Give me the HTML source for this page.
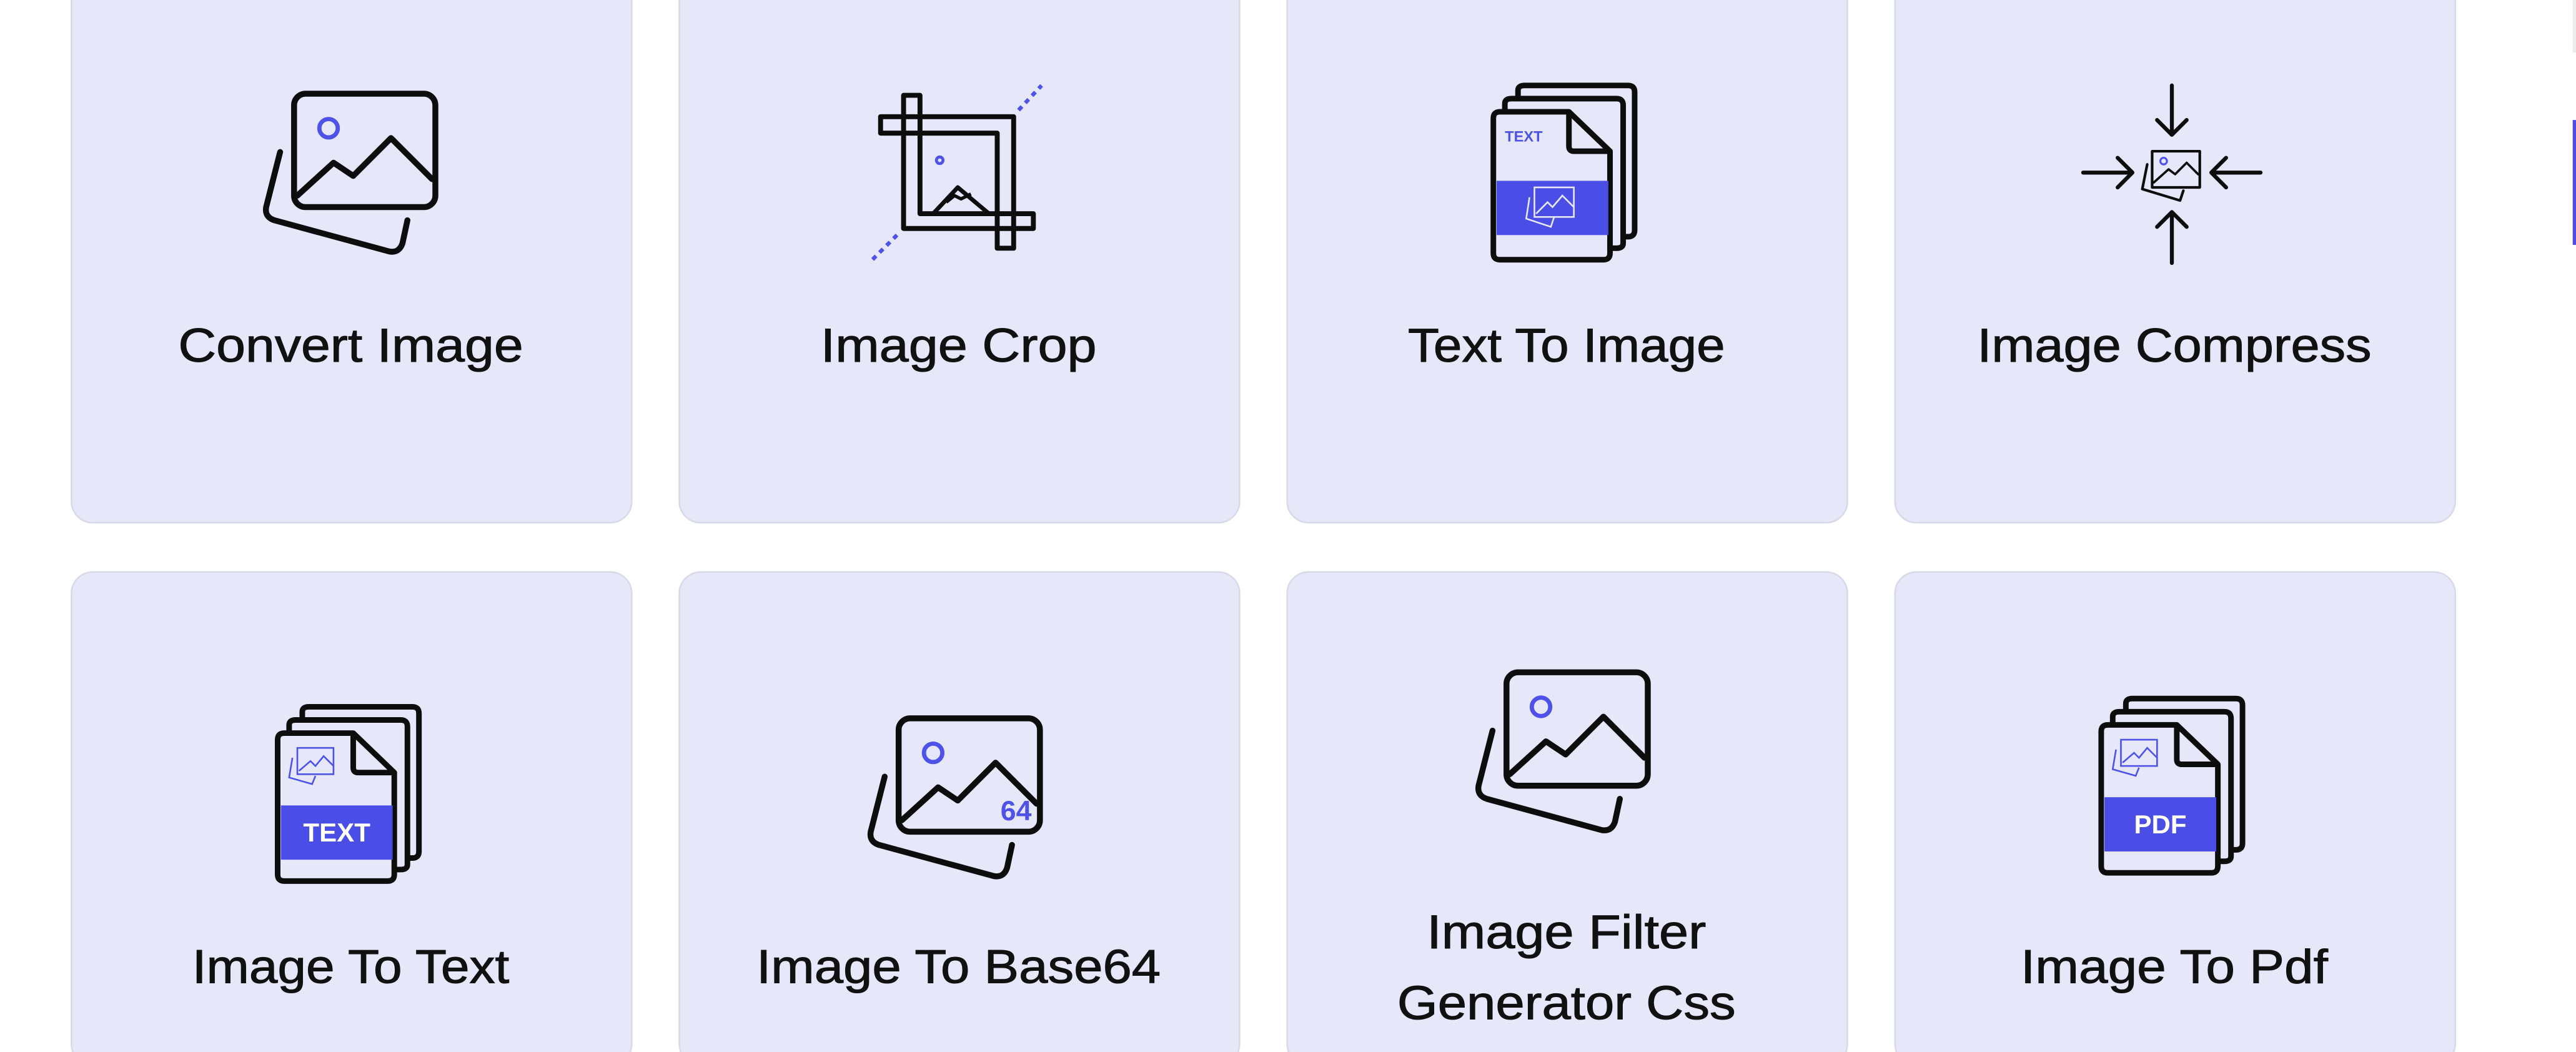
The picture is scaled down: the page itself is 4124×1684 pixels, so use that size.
<!DOCTYPE html>
<html><head><meta charset="utf-8"><style>
html,body{margin:0;padding:0;background:#fff;overflow:hidden;width:4124px;height:1684px}
svg{display:block}
text{font-family:"Liberation Sans",sans-serif;fill:#111}
</style></head><body>
<svg width="4124" height="1684" viewBox="0 0 1568 640" preserveAspectRatio="none" xmlns="http://www.w3.org/2000/svg" style="overflow:hidden">
<rect x="0" y="0" width="1568" height="640" fill="#fff"/>
<rect x="1566" y="0" width="2" height="32" fill="#ececec"/>
<rect x="1566" y="73" width="2" height="76" fill="#4a4de6"/>
<g fill="#e6e7f9" stroke="#d9dae8" stroke-width="1">
<rect x="43.5" y="-30" width="341" height="348" rx="13"/>
<rect x="413.5" y="-30" width="341" height="348" rx="13"/>
<rect x="783.5" y="-30" width="341" height="348" rx="13"/>
<rect x="1153.5" y="-30" width="341" height="348" rx="13"/>
<rect x="43.5" y="348" width="341" height="300" rx="13"/>
<rect x="413.5" y="348" width="341" height="300" rx="13"/>
<rect x="783.5" y="348" width="341" height="300" rx="13"/>
<rect x="1153.5" y="348" width="341" height="300" rx="13"/>
</g>
<g font-size="29" text-anchor="middle" stroke="#111" stroke-width="0.4">
<text x="213.5" y="220" textLength="210" lengthAdjust="spacingAndGlyphs">Convert Image</text>
<text x="583.5" y="220" textLength="168" lengthAdjust="spacingAndGlyphs">Image Crop</text>
<text x="953.5" y="220" textLength="193" lengthAdjust="spacingAndGlyphs">Text To Image</text>
<text x="1323.5" y="220" textLength="240" lengthAdjust="spacingAndGlyphs">Image Compress</text>
<text x="213.5" y="598" textLength="193" lengthAdjust="spacingAndGlyphs">Image To Text</text>
<text x="583.5" y="598" textLength="246" lengthAdjust="spacingAndGlyphs">Image To Base64</text>
<text x="953.5" y="577" textLength="170" lengthAdjust="spacingAndGlyphs">Image Filter</text>
<text x="953.5" y="620" textLength="206" lengthAdjust="spacingAndGlyphs">Generator Css</text>
<text x="1323.5" y="598" textLength="187" lengthAdjust="spacingAndGlyphs">Image To Pdf</text>
</g>
<defs>
<g id="pic" fill="none" stroke="#0d0d0d" stroke-width="3.6" stroke-linecap="round" stroke-linejoin="round">
<rect x="179" y="57" width="86" height="69" rx="7"/>
<polyline points="181,119 203,99 215,107 238,84 263,109"/>
<path d="M170.5,92.5 L162,126 Q161,132 167,134 L237,153 Q243,154 245,148 L248,134"/>
<circle cx="200" cy="78" r="5.6" stroke="#4f52e8" stroke-width="2.6"/>
</g>
</defs>
<use href="#pic"/>
<use href="#pic" transform="translate(368,380)"/>
<use href="#pic" transform="translate(738,352)"/>
<text x="609" y="499" font-size="17" font-weight="bold" style="fill:#4f52e8">64</text>
<!-- crop -->
<g fill="none" stroke="#0d0d0d" stroke-width="3" stroke-linejoin="round">
<path d="M536,71 H617 V151 H607 V81 H536 Z"/>
<path d="M550,58 H560 V130 H629 V139 H550 Z"/>
<polyline points="568,130 583,114 602,130" stroke-width="2.6"/>
<polyline points="576,123 581,119 585,121 591,118" stroke-width="2"/>
</g>
<circle cx="572" cy="97.5" r="2" fill="none" stroke="#4f52e8" stroke-width="1.8"/>
<g stroke="#4f52e8" stroke-width="2.4" stroke-dasharray="3,3">
<line x1="620" y1="67" x2="634" y2="52"/>
<line x1="546" y1="143" x2="531" y2="158"/>
</g>
<defs>
<g id="doc">
<g fill="none" stroke="#0d0d0d" stroke-width="3.4" stroke-linejoin="round">
<path d="M924,60 V55 Q924,52 928,52 H991 Q995,52 995,56 V140 Q995,144 991,144 H989"/>
<path d="M916,68 V63 Q916,60 920,60 H984 Q988,60 988,64 V148 Q988,151 984,151 H980"/>
<path d="M913,68 H955 L980,92 V154 Q980,158 976,158 H913 Q909,158 909,154 V72 Q909,68 913,68 Z" fill="#e6e7f9"/>
<path d="M955,68 V89 Q955,92 958,92 H980"/>
</g>
</g>
</defs>
<use href="#doc"/>
<rect x="911" y="110" width="68" height="33" fill="#4a4de6"/>
<g fill="none" stroke="#e6e7f9" stroke-width="1"><rect x="934" y="114" width="24" height="18"/><polyline points="935,130 942,123 945,126 951,119 958,126"/><path d="M931,120 L929,133 L944,138 L946,132"/></g>
<text x="916" y="86" font-size="9" font-weight="bold" style="fill:#4f52e8">TEXT</text>
<g transform="translate(-740,378)">
<use href="#doc"/>
<rect x="911" y="112" width="68" height="33" fill="#4a4de6"/>
<text x="945" y="134" font-size="16" font-weight="bold" text-anchor="middle" style="fill:#fff">TEXT</text>
<g fill="none" stroke="#4f52e8" stroke-width="1"><rect x="921" y="77" width="22" height="16"/><polyline points="922,91 929,85 932,88 937,82 943,88"/><path d="M918,83 L916,95 L930,99 L932,94"/></g>
</g>
<g transform="translate(370,373)">
<use href="#doc"/>
<rect x="911" y="112" width="68" height="33" fill="#4a4de6"/>
<text x="945" y="134" font-size="16" font-weight="bold" text-anchor="middle" style="fill:#fff">PDF</text>
<g fill="none" stroke="#4f52e8" stroke-width="1"><rect x="921" y="77" width="22" height="16"/><polyline points="922,91 929,85 932,88 937,82 943,88"/><path d="M918,83 L916,95 L930,99 L932,94"/></g>
</g>
<g fill="none" stroke="#0d0d0d" stroke-width="2.4" stroke-linecap="round" stroke-linejoin="round">
<path d="M1322,52 V82 M1313,73 L1322,82 L1331,73"/>
<path d="M1322,160 V129 M1313,138 L1322,129 L1331,138"/>
<path d="M1268,105 H1298 M1289,96 L1298,105 L1289,114"/>
<path d="M1376,105 H1346 M1355,96 L1346,105 L1355,114"/>
<rect x="1310" y="92" width="29" height="22" stroke-width="1.6"/>
<polyline points="1311,111 1320,103 1324,106 1331,99 1338,106" stroke-width="1.4"/>
<path d="M1307,100 L1304,115 L1327,122 L1329,116" stroke-width="1.6"/>
</g>
<circle cx="1317" cy="98" r="2" fill="none" stroke="#4f52e8" stroke-width="1.2"/>
</svg>
</body></html>
